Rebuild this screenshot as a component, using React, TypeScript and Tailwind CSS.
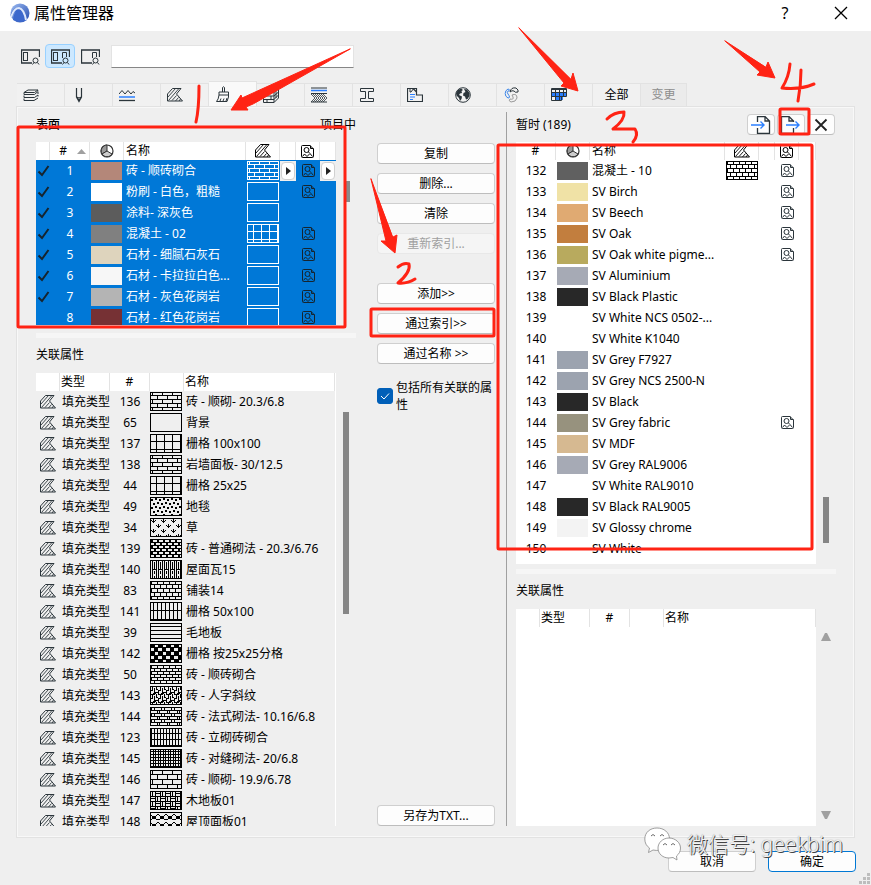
import clsx from 'clsx';
import { useId, type ReactNode } from 'react';

type Pattern = { w: number; h: number; d: string; fill?: boolean };

const PATTERNS: Record<string, Pattern> = {
  brick: { w: 10, h: 8, d: 'M0 3.5H10M0 7.5H10M2.5 0V4M7.5 4V8' },
  brickWide: { w: 10, h: 10, d: 'M0 4.5H10M0 9.5H10M2.5 0V5M7.5 5V10' },
  grid: { w: 8, h: 8, d: 'M6.5 0V8M0 7.5H8' },
  dots: {
    w: 8,
    h: 8,
    d: 'M1 2H3V4H1ZM5 1H7V3H5ZM3 6H5V8H3ZM7 5H8V7H7ZM0 5H1V7H0Z',
    fill: true,
  },
  grass: {
    w: 10,
    h: 10,
    d: 'M1 2L3.5 4.5L6 2M3.5 1V5M6 7L8.5 9.5L11 7M8.5 6V10M-4 7L-1.5 9.5L1 7',
  },
  brickDense: {
    w: 6,
    h: 6,
    d: 'M0 0H6V1H0ZM0 3H6V4H0ZM1 0H3V3H1ZM4 3H6V6H4Z',
    fill: true,
  },
  roof: { w: 6, h: 14, d: 'M.5 0V14M2.5 0V14M4.5 2V9M4.5 11V14M2.5 9.5H6' },
  paving: { w: 6, h: 8, d: 'M0 3.5H6M0 7.5H6M1.5 0V4M4.5 4V8' },
  gridTall: { w: 4, h: 9, d: 'M3.5 0V9M0 8.5H4' },
  planks: { w: 8, h: 4, d: 'M0 3.5H8' },
  checker: { w: 8, h: 8, d: 'M0 0H5V4H0ZM4 4H8V8H4ZM0 3H8V5H4V4H0ZM0 7H8V8H0Z', fill: true },
  bond: { w: 6, h: 6, d: 'M0 .5H6M0 3.5H6M1.5 0V3M4.5 3V6' },
  herringbone: {
    w: 8,
    h: 8,
    d: 'M0 .5H5M2.5 .5V5M4.5 2V7M0 4.5H2M6.5 0V4M6 3.5H8M4 6.5H8M.5 4V8M2.500 7.500H6',
  },
  french: { w: 10, h: 6, d: 'M0 .5H10M0 3.5H10M1.5 0V3M4.5 0V3M7.5 3V6M9.5 3V6' },
  soldier: { w: 3, h: 6, d: 'M1.5 0V6M0 5.5H3' },
  stack: { w: 5, h: 3, d: 'M.5 0V3M3.5 0V3M0 2.5H5' },
  parquet: {
    w: 10,
    h: 10,
    d: 'M.5 0V10M5.5 0V10M0 .5H10M0 5.5H10M2.5 0V5M7.5 5V10M5 2.5H10M0 7.5H5',
  },
  scales: { w: 8, h: 8, d: 'M0 2L2 4H6L8 2M2 4L4 7L6 4M0 8L4 6L8 8' },
  none: { w: 8, h: 8, d: '' },
};

const FillSwatch = ({ type, className }: { type: string; className?: string }) => {
  const id = useId();
  const p = PATTERNS[type];
  return (
    <svg
      width="32"
      height="19"
      viewBox="0 0 32 19"
      shapeRendering="crispEdges"
      className={clsx('block', className)}>
      <defs>
        <pattern id={id} width={p.w} height={p.h} patternUnits="userSpaceOnUse">
          <path
            d={p.d}
            fill={p.fill ? 'currentColor' : 'none'}
            stroke={p.fill ? 'none' : 'currentColor'}
          />
        </pattern>
      </defs>
      <rect width="32" height="19" fill={`url(#${id})`} />
      <rect x=".5" y=".5" width="31" height="18" fill="none" stroke="currentColor" />
    </svg>
  );
};

const Icon = ({
  children,
  w = 16,
  h = 16,
  className,
}: {
  children: ReactNode;
  w?: number;
  h?: number;
  className?: string;
}) => (
  <svg
    width={w}
    height={h}
    viewBox={`0 0 ${w} ${h}`}
    fill="none"
    stroke="currentColor"
    aria-hidden
    className={clsx('block shrink-0', className)}>
    {children}
  </svg>
);

const HatchIcon = ({ className }: { className?: string }) => (
  <Icon h={14} className={className}>
    <path d="M.5 13V6L5.500 .5H14L9.500 6L15.500 13Z" />
    <path
      d="M1 9L8.500 .5M1.500 12.500L11.500 1M5 12.500L9.500 7.500M8.500 13L11.500 9.500M12 13L13.500 11"
      strokeWidth=".9"
    />
  </Icon>
);

const MediaIcon = () => (
  <Icon w={13} h={13} className="mx-auto">
    <path d="M.5 1.500Q.5 .5 1.500 .5H9L12.500 4V11.500Q12.500 12.500 11.500 12.500H1.500Q.5 12.500 .5 11.500Z" />
    <path d="M9.500 .5V3.500H12.500M1.500 11.500L3.500 9L6 11.500L9 8.500L11.500 11.500" />
    <circle cx="5.500" cy="5" r="2.500" />
    <path d="M7.500 7L8.500 8" />
  </Icon>
);

const SurfaceIcon = () => (
  <Icon w={14} h={14} className="mx-auto text-[#333]">
    <circle cx="7" cy="7" r="6" fill="#fff" strokeWidth="1.200" />
    <path d="M7 7V1A6 6 0 0 0 2 10Z" fill="#999" />
    <path d="M7 7L2 10A6 6 0 0 0 12 10Z" fill="#ccc" />
  </Icon>
);

const LayoutIcon = ({ panes }: { panes: 'left' | 'both' | 'right' }) => (
  <Icon w={19} h={16}>
    <path d="M11 14H.5V1H18.500V8" strokeWidth="1.300" />
    {panes !== 'right' && <rect x="2.500" y="3.500" width="4" height="8" />}
    {panes !== 'left' && <path d="M11.500 9V3.500H15.500V8" />}
    <circle cx="14.500" cy="11.500" r="2.500" />
    <path d="M16.500 13.500L18 15.500M13 13.500L11.500 15.500" />
  </Icon>
);

const TABS: { name: string; icon: ReactNode }[] = [
  {
    name: '图层',
    icon: (
      <Icon>
        <path d="M1 5.500L5 3H15L11.500 5.500ZM1 5.500V7.500H11.500L15.500 4M1 8.500V10.500H11.500L15 8M1 11.500V13.500H11L15 11M15 5V7M15 8V9.500" />
      </Icon>
    ),
  },
  {
    name: '画笔',
    icon: (
      <Icon>
        <path d="M5.500 1V10L8 14.500L10.500 10V1M5.500 10L8 11L10.500 10M8 12V15" strokeWidth="1.200" />
      </Icon>
    ),
  },
  {
    name: '线型',
    icon: (
      <Icon>
        <path d="M0 7L3 3.500L6 7L9 3.500L12 7L14 4.500L16 6" />
        <path d="M0 10H16" stroke="#2a7fff" strokeWidth="1.500" />
        <path d="M0 13.500H16" strokeWidth="1.300" />
      </Icon>
    ),
  },
  { name: '填充', icon: <HatchIcon /> },
  {
    name: '表面',
    icon: (
      <Icon>
        <path d="M7.500 6V1.500Q8.500 0 9.500 1.500V6M4 9V6H13.500V9M4 9H13.500V11L12 15.500H1.500Q3.500 13.500 4 9ZM5 15L6 12.500M8 15L9 12.500M11 15L12 12" />
      </Icon>
    ),
  },
  {
    name: '建筑材料',
    icon: (
      <Icon>
        <path d="M.5 5.500H11V15.500H.5ZM.5 9H11M.5 12.500H11M4 5.500V9M8 9V12.500M4 12.500V15.500M.5 5.500L5 1.500H15.500L11 5.500M15.500 1.500V11L11 15.500M11 9L15.500 5M11 12.500L15.500 8M13 4V11" />
      </Icon>
    ),
  },
  {
    name: '复合结构',
    icon: (
      <Icon>
        <path d="M0 1H16M0 6.500H16M0 15H16" />
        <path d="M0 3.500H16" stroke="#2a7fff" strokeWidth="1.500" />
        <path
          d="M0 7L4 11M4 7L8 11M8 7L12 11M12 7L16 11M0 15L4 11M4 15L8 11M8 15L12 11M12 15L16 11M2 7L6 11M6 7L10 11M10 7L14 11M2 15L6 11M6 15L10 11M10 15L14 11"
          strokeWidth=".8"
        />
      </Icon>
    ),
  },
  {
    name: '截面',
    icon: (
      <Icon>
        <path d="M1.500 1.500H14.500V4.500H9.500V11.500H14.500V14.500H1.500V11.500H6.500V4.500H1.500Z" />
      </Icon>
    ),
  },
  {
    name: '区域',
    icon: (
      <Icon>
        <path d="M.5 1.500H9.500V8H15.500V14.500H.5ZM9.500 5L6 1.500" strokeWidth="1.200" />
        <path d="M3 7.500H8M3 10H8M3 12.500H6" stroke="#2a7fff" />
        <path d="M3 1V5H4L7 1" />
      </Icon>
    ),
  },
  {
    name: '城市',
    icon: (
      <Icon>
        <circle cx="8" cy="8" r="7.300" />
        <path
          d="M1 6L3 3L6 1.500L8 3L6.500 4L7 6L5 6.500L4 8L7 9.500L6.500 12L5 14L4 11L1.500 8.500ZM9 2L12 2.500L14.500 6L14.500 9L12.500 12L11 12.500L10 9.500L8 8.500L8.500 6L10.500 5Z"
          fill="currentColor"
          stroke="none"
        />
      </Icon>
    ),
  },
  {
    name: '操作配置文件',
    icon: (
      <Icon>
        <path d="M5 2A5 5 0 0 0 5 11Q8 11 5 7Q3 4 6 4Q7 2 5 2Z" stroke="#3c86e8" />
        <path d="M7 5Q8 0 13 1Q16 3 15 5Q12 6 11 4Q9 3 7 5Z" />
        <path d="M9 8Q14 6 14 11Q13 15 8 15Q5 14 7 12Q11 13 10 10Z" stroke="#999" />
      </Icon>
    ),
  },
  {
    name: 'MEP系统',
    icon: (
      <Icon>
        <path d="M1 5H16V9H12V13H4V9H1Z" fill="#2a7fff" stroke="none" />
        <path d="M.5 1.500V13.500H10.500V9.500H15.500V1.500ZM4.500 2V13M8.500 2V13M12.500 2V10M.5 5.500H15.500M.5 9.500H12" />
        <path d="M.5 2.500H15.500" />
      </Icon>
    ),
  },
];

const SURFACES = [
  { no: 1, color: '#b48779', name: '砖 - 顺砖砌合', fill: 'brick', media: true },
  { no: 2, color: '#ffffff', name: '粉刷 - 白色，粗糙', fill: 'none', media: true },
  { no: 3, color: '#5c5c5c', name: '涂料- 深灰色', fill: 'none', media: false },
  { no: 4, color: '#808080', name: '混凝土 - 02', fill: 'grid', media: true },
  { no: 5, color: '#ded4bd', name: '石材 - 细腻石灰石', fill: 'none', media: true },
  { no: 6, color: '#f7f7f7', name: '石材 - 卡拉拉白色...', fill: 'none', media: true },
  { no: 7, color: '#b4b4b4', name: '石材 - 灰色花岗岩', fill: 'none', media: true },
  { no: 8, color: '#763134', name: '石材 - 红色花岗岩', fill: 'none', media: true },
];

const FILLS = [
  { no: 136, fill: 'brick', name: '砖 - 顺砌- 20.3/6.8' },
  { no: 65, fill: 'none', name: '背景' },
  { no: 137, fill: 'grid', name: '栅格 100x100' },
  { no: 138, fill: 'brick', name: '岩墙面板- 30/12.5' },
  { no: 44, fill: 'grid', name: '栅格 25x25' },
  { no: 49, fill: 'dots', name: '地毯' },
  { no: 34, fill: 'grass', name: '草' },
  { no: 139, fill: 'brickDense', name: '砖 - 普通砌法 - 20.3/6.76' },
  { no: 140, fill: 'roof', name: '屋面瓦15' },
  { no: 83, fill: 'paving', name: '铺装14' },
  { no: 141, fill: 'gridTall', name: '栅格 50x100' },
  { no: 39, fill: 'planks', name: '毛地板' },
  { no: 142, fill: 'checker', name: '栅格 按25x25分格' },
  { no: 50, fill: 'bond', name: '砖 - 顺砖砌合' },
  { no: 143, fill: 'herringbone', name: '砖 - 人字斜纹' },
  { no: 144, fill: 'french', name: '砖 - 法式砌法- 10.16/6.8' },
  { no: 123, fill: 'soldier', name: '砖 - 立砌砖砌合' },
  { no: 145, fill: 'stack', name: '砖 - 对缝砌法- 20/6.8' },
  { no: 146, fill: 'brickWide', name: '砖 - 顺砌- 19.9/6.78' },
  { no: 147, fill: 'parquet', name: '木地板01' },
  { no: 148, fill: 'scales', name: '屋顶面板01' },
];

const TEMPORARY = [
  { no: 132, color: '#606060', name: '混凝土 - 10', fill: 'paving', media: true },
  { no: 133, color: '#f0e2a6', name: 'SV Birch', media: true },
  { no: 134, color: '#e0aa72', name: 'SV Beech', media: true },
  { no: 135, color: '#c27e3e', name: 'SV Oak', media: true },
  { no: 136, color: '#b8aa5e', name: 'SV Oak white pigme...', media: true },
  { no: 137, color: '#a6aab5', name: 'SV Aluminium' },
  { no: 138, color: '#282828', name: 'SV Black Plastic' },
  { no: 139, color: '#ffffff', name: 'SV White NCS 0502-...' },
  { no: 140, color: '#ffffff', name: 'SV White K1040' },
  { no: 141, color: '#9ca3af', name: 'SV Grey F7927' },
  { no: 142, color: '#9ca3af', name: 'SV Grey NCS 2500-N' },
  { no: 143, color: '#282828', name: 'SV Black' },
  { no: 144, color: '#97927e', name: 'SV Grey fabric', media: true },
  { no: 145, color: '#d6b991', name: 'SV MDF' },
  { no: 146, color: '#a6aab5', name: 'SV Grey RAL9006' },
  { no: 147, color: '#ffffff', name: 'SV White RAL9010' },
  { no: 148, color: '#282828', name: 'SV Black RAL9005' },
  { no: 149, color: '#f3f3f3', name: 'SV Glossy chrome' },
  { no: 150, color: '#ffffff', name: 'SV White' },
];

const Th = ({ children, className }: { children?: ReactNode; className?: string }) => (
  <th
    className={clsx(
      'h-[18px] border-r border-[#e3e3e3] bg-white p-0 font-normal leading-[18px]',
      className,
    )}>
    {children}
  </th>
);

const ColorBox = ({ color }: { color: string }) => (
  <div className="ml-px h-[18px] w-[31px]" style={{ backgroundColor: color }} />
);

const Button = ({
  children,
  disabled,
  className,
}: {
  children: ReactNode;
  disabled?: boolean;
  className?: string;
}) => (
  <button
    type="button"
    disabled={disabled}
    className={clsx(
      'flex h-[21px] items-center justify-center rounded border',
      disabled
        ? 'border-[#e8e8e8] bg-[#f5f5f5] text-[#a0a0a0]'
        : 'border-[#cfcfcf] border-b-[#bdbdbd] bg-[#fdfdfd]',
      className,
    )}>
    {children}
  </button>
);

const PopButton = ({ label }: { label: string }) => (
  <div className="flex h-5 items-center justify-center bg-[#efefef]">
    <button
      type="button"
      aria-label={label}
      className="flex h-[18px] w-[14px] items-center justify-center rounded border border-[#d0d0d0] bg-white text-[#222]">
      <Icon w={5} h={8}>
        <path d="M0 0L5 4L0 8Z" fill="currentColor" stroke="none" />
      </Icon>
    </button>
  </div>
);

const SurfaceTable = () => (
  <div className="h-[183px] grow overflow-hidden">
    <table className="w-full table-fixed border-separate border-spacing-0">
      <colgroup>
        <col className="w-[14px]" />
        <col className="w-[40px]" />
        <col className="w-[34px]" />
        <col />
        <col className="w-[34px]" />
        <col className="w-[16px]" />
        <col className="w-[24px]" />
        <col className="w-[16px]" />
      </colgroup>
      <thead>
        <tr>
          <Th />
          <Th>
            <div className="flex items-center justify-end gap-[10px] pr-[3px]">
              #
              <Icon w={9} h={5} className="text-[#a0a0a0]">
                <path d="M0 5L4.500 0L9 5Z" fill="currentColor" stroke="none" />
              </Icon>
            </div>
          </Th>
          <Th>
            <SurfaceIcon />
          </Th>
          <Th className="pl-[2px] text-left">名称</Th>
          <Th>
            <HatchIcon className="mx-auto" />
          </Th>
          <Th />
          <Th>
            <MediaIcon />
          </Th>
          <Th />
        </tr>
      </thead>
      <tbody className="bg-[#0078d7] text-white">
        {SURFACES.map(row => (
          <tr key={row.no} className="h-[21px]">
            <td className="p-0 text-[#16242e]">
              {row.no < 8 && (
                <Icon w={13} h={12} className="ml-px">
                  <path d="M1.500 6.500L5 10L11.500 1" strokeWidth="2" />
                </Icon>
              )}
            </td>
            <td className="p-0 text-center">{row.no}</td>
            <td className="p-0">
              <ColorBox color={row.color} />
            </td>
            <td className="truncate p-0 pl-[2px]">{row.name}</td>
            <td className="p-0">
              <FillSwatch type={row.fill} className="ml-px" />
            </td>
            <td className="p-0">{row.no === 1 && <PopButton label="选择填充" />}</td>
            <td className="p-0 text-[#16242e]">{row.media && <MediaIcon />}</td>
            <td className="p-0">{row.no === 1 && <PopButton label="选择纹理" />}</td>
          </tr>
        ))}
      </tbody>
    </table>
  </div>
);

const RelatedHead = () => (
  <>
    <colgroup>
      <col className="w-[24px]" />
      <col className="w-[50px]" />
      <col className="w-[40px]" />
      <col className="w-[34px]" />
      <col />
    </colgroup>
    <thead>
      <tr>
        <Th />
        <Th className="pl-px text-left">类型</Th>
        <Th>#</Th>
        <Th />
        <Th className="pl-px text-left">名称</Th>
      </tr>
    </thead>
  </>
);

const FillTable = () => (
  <div className="h-[453px] grow overflow-hidden border-r border-white">
    <table className="w-full table-fixed border-separate border-spacing-0">
      <RelatedHead />
      <tbody>
        {FILLS.map(row => (
          <tr key={row.no} className="h-[21px]">
            <td className="p-0 pl-[4px] text-[#2b353b]">
              <HatchIcon />
            </td>
            <td className="overflow-hidden whitespace-nowrap p-0 pl-[2px]">填充类型</td>
            <td className="p-0 text-center">{row.no}</td>
            <td className="p-0">
              <FillSwatch type={row.fill} />
            </td>
            <td className="whitespace-nowrap p-0 pl-[2px]">{row.name}</td>
          </tr>
        ))}
      </tbody>
    </table>
  </div>
);

const TemporaryTable = () => (
  <div className="h-[422px] grow bg-white">
    <div className="h-[411px] overflow-hidden">
      <table className="w-full table-fixed border-separate border-spacing-0">
        <colgroup>
          <col className="w-[40px]" />
          <col className="w-[34px]" />
          <col />
          <col className="w-[34px]" />
          <col className="w-[16px]" />
          <col className="w-[24px]" />
          <col className="w-[17px]" />
        </colgroup>
        <thead>
          <tr>
            <Th>#</Th>
            <Th>
              <SurfaceIcon />
            </Th>
            <Th className="pl-[2px] text-left">名称</Th>
            <Th>
              <HatchIcon className="mx-auto" />
            </Th>
            <Th />
            <Th>
              <MediaIcon />
            </Th>
            <Th />
          </tr>
        </thead>
        <tbody>
          {TEMPORARY.map(row => (
            <tr key={row.no} className="h-[21px]">
              <td className="p-0 text-center">{row.no}</td>
              <td className="p-0">
                <ColorBox color={row.color} />
              </td>
              <td className="truncate p-0 pl-[2px]">{row.name}</td>
              <td className="p-0">
                {row.fill && <FillSwatch type={row.fill} className="ml-px" />}
              </td>
              <td className="p-0" />
              <td className="p-0 text-[#2b353b]">{row.media && <MediaIcon />}</td>
              <td className="p-0" />
            </tr>
          ))}
        </tbody>
      </table>
    </div>
  </div>
);

// red pen marks drawn over the dialog
const Marks = () => (
  <svg
    width="871"
    height="885"
    viewBox="0 0 871 885"
    className="pointer-events-none absolute left-0 top-0 text-[#ff2314]"
    fill="none"
    stroke="currentColor"
    strokeWidth="3"
    strokeLinecap="round"
    strokeLinejoin="round"
    aria-hidden>
    <rect x="18" y="127" width="327" height="200" rx="1" />
    <rect x="498" y="145" width="314" height="404" rx="1" />
    <rect x="371" y="309" width="123" height="27" rx="1" />
    <rect x="780" y="109" width="29" height="25" rx="1" />
    <g fill="currentColor" strokeWidth="1">
      <path d="M350 49L242 98L241 95L231 110L248 110L246 107L253 104Z" />
      <path d="M371 179L386 241L381 241L395 253L397 235L393 237Z" />
      <path d="M519 28L564 83L561 86L578 91L573 73L571 79Z" />
      <path d="M725 41L760 72L757 75L775 78L768 62L766 67Z" />
    </g>
    <path d="M199 86Q199 109 196 122" />
    <path d="M398 267Q404 262 409 264Q411 272 398 283Q407 284 415 279" />
    <path d="M607 119Q614 112 624 112Q625 120 613 129L635 129Q639 135 633 142" />
    <path d="M790 64Q789 77 782 88Q800 90 814 84M801 70Q801 85 798 101" />
  </svg>
);

const Watermark = () => (
  <div className="pointer-events-none absolute bottom-6 right-7 flex items-center gap-[6px]">
    <svg width="37" height="34" viewBox="0 0 37 34" fill="#fff" stroke="#888" strokeWidth=".8">
      <path d="M13 1C6 1 .8 5.500 .8 12C.8 16 2.500 19 5.500 21L4.500 25.500L9 23C18 25 25.500 20 25.500 12C25.500 5.500 20 1 13 1Z" />
      <path d="M25 11C19 11 14 15.500 14 21C14 27 19 31 25 31L29 30.500L33 33L32.500 29C35 27 36.500 24.500 36.500 21C36.500 15.500 31 11 25 11Z" />
      <path d="M7 9Q9 6 11 9M16 9Q18 6 20 9M19 18Q21 15 23 18M27 18Q29 15 31 18" fill="none" stroke="#444" />
    </svg>
    <span className="whitespace-nowrap text-[21px] leading-8 font-light text-[#f4f4f4] [text-shadow:1px_1px_0_#444,0_0_1px_#777]">
      微信号: geekbim
    </span>
  </div>
);

export default function App() {
  return (
    <div className="relative flex min-h-screen flex-col bg-[#efefef] font-['Noto_Sans','Noto_Sans_CJK_SC',sans-serif] text-xs text-black">
      <header className="flex h-[31px] items-center bg-white pl-[10px] pb-[6px]">
        <svg width="20" height="20" viewBox="0 0 20 20" aria-hidden>
          <defs>
            <linearGradient id="logo" x1="0" y1="0" x2="1" y2="1">
              <stop offset="0" stopColor="#9dbcf2" />
              <stop offset="1" stopColor="#2149ad" />
            </linearGradient>
          </defs>
          <circle cx="10" cy="10" r="9.500" fill="url(#logo)" />
          <path d="M0 13Q3 4 9 4Q15 5 17 17Q11 21 3 17Q4 8 9 6" fill="#3c68cc" />
          <path d="M1 14Q4 5 9 5Q14 6 16 17" fill="none" stroke="#dfe9fc" strokeWidth="2" />
        </svg>
        <h1 className="ml-1 grow text-base leading-6">属性管理器</h1>
        <button type="button" className="w-8 text-base leading-6">
          ?
        </button>
        <button type="button" aria-label="关闭" className="ml-[33px] mr-[23px]">
          <Icon w={14} h={14}>
            <path d="M1 1L13 13M13 1L1 13" strokeWidth="1.300" />
          </Icon>
        </button>
      </header>

      <div className="flex h-[50px] items-center pl-[15px] text-[#2b353b]">
        {(['left', 'both', 'right'] as const).map(panes => (
          <button
            key={panes}
            type="button"
            aria-label={panes}
            className={clsx(
              'flex h-6 w-[30px] items-center justify-center rounded-sm border pt-px',
              panes === 'both'
                ? 'border-[#99d1ff] bg-[#cce8ff]'
                : 'border-transparent',
            )}>
            <LayoutIcon panes={panes} />
          </button>
        ))}
        <input
          type="text"
          aria-label="搜索"
          className="ml-[6px] h-[23px] w-[243px] border border-[#e3e3e3] border-b-[#868686] bg-white px-1 outline-none"
        />
      </div>

      <nav className="flex h-[25px] items-end pl-[17px]">
        {TABS.map(tab => (
          <button
            key={tab.name}
            type="button"
            aria-label={tab.name}
            className={clsx(
              'flex w-[48px] items-center border-t border-r border-[#e2e2e2] pl-[6px] text-[#2b353b]',
              tab.name === '表面' ? 'h-[25px] bg-[#f9f9f9]' : 'h-[23px] bg-[#f1f1f1]',
            )}>
            {tab.icon}
          </button>
        ))}
        <button
          type="button"
          className="h-[23px] w-[48px] border-t border-r border-[#e2e2e2] bg-[#f1f1f1]">
          全部
        </button>
        <button
          type="button"
          disabled
          className="h-[23px] w-[46px] border-t border-r border-[#e2e2e2] bg-[#ebebeb] text-[#8d8d8d]">
          变更
        </button>
      </nav>

      <main className="mx-4 flex border border-[#e2e2e2] pb-[11px] pl-[19px] pr-[18px] outline-1 -outline-offset-2 outline-[#f8f8f8]">
        <section className="flex min-w-0 flex-[320] flex-col">
          <div className="flex h-[35px] items-center justify-between">
            <h2 className="font-medium">表面</h2>
            <span>项目中</span>
          </div>
          <div className="flex">
            <SurfaceTable />
            <div className="w-5 shrink-0 pl-[10px] pt-[39px]">
              <div className="h-[21px] w-1 bg-[#8a8a8a]" />
            </div>
          </div>
          <div className="mt-2 h-[5px] bg-[#f6f6f6]" />
          <h2 className="h-[35px] leading-[33px]">关联属性</h2>
          <div className="flex">
            <FillTable />
            <div className="w-5 shrink-0 pl-[7px] pt-[39px]">
              <div className="h-[202px] w-[6px] bg-[#868686]" />
            </div>
          </div>
        </section>

        <section className="ml-[21px] flex w-[118px] shrink-0 flex-col gap-[9px] pt-9">
          <Button>复制</Button>
          <Button>删除...</Button>
          <Button>清除</Button>
          <Button disabled>重新索引...</Button>
          <Button className="mt-5">添加&gt;&gt;</Button>
          <Button>通过索引&gt;&gt;</Button>
          <Button>通过名称 &gt;&gt;</Button>
          <label className="mt-[6px] flex items-center gap-[3px] leading-[17px]">
            <span className="relative h-4 w-4 shrink-0">
              <input
                type="checkbox"
                defaultChecked
                className="peer block h-4 w-4 appearance-none rounded-[3px] border border-[#888] checked:border-[#005fb8] checked:bg-[#005fb8]"
              />
              <Icon className="pointer-events-none absolute left-0 top-0 text-white opacity-0 peer-checked:opacity-100">
                <path d="M4 8L7 11L12 5.500" />
              </Icon>
            </span>
            包括所有关联的属性
          </label>
          <Button className="mt-auto">另存为TXT...</Button>
        </section>

        <div className="ml-[11px] mt-[5px] w-px shrink-0 bg-[#a0a0a0]" />

        <section className="ml-[9px] flex min-w-0 flex-[320] flex-col">
          <div className="flex h-[35px] items-center gap-[2px] pr-px">
            <h2 className="grow">暂时 (189)</h2>
            <Button className="w-7">
              <Icon w={20} h={18}>
                <path d="M6.500 6V.5H14L18.500 5V17.500H6.500V12M14 .5V5H18.500" stroke="#2b353b" strokeWidth="1.300" />
                <path d="M0 9H13M9.500 5.500L13 9L9.500 12.500" stroke="#2a7fff" strokeWidth="1.400" />
              </Icon>
            </Button>
            <Button className="w-7">
              <Icon w={20} h={18}>
                <path d="M12.500 6V5L8 .5H.5V17.500H12.500V12M8 .5V5H12.500" stroke="#2b353b" strokeWidth="1.300" />
                <path d="M5 9H18M14.500 5.500L18 9L14.500 12.500" stroke="#2a7fff" strokeWidth="1.400" />
              </Icon>
            </Button>
            <Button className="w-7">
              <Icon w={14} h={14}>
                <path d="M1.500 1.500L12.500 12.500M12.500 1.500L1.500 12.500" stroke="#222" strokeWidth="1.800" />
              </Icon>
            </Button>
          </div>
          <div className="flex">
            <TemporaryTable />
            <div className="w-5 shrink-0 pl-[7px] pt-[355px]">
              <div className="h-[46px] w-[6px] bg-[#868686]" />
            </div>
          </div>
          <div className="mt-[5px] h-[5px] bg-[#f6f6f6]" />
          <h2 className="h-[35px] leading-[33px]">关联属性</h2>
          <div className="flex grow">
            <div className="grow bg-white">
              <table className="w-full table-fixed border-separate border-spacing-0">
                <RelatedHead />
              </table>
            </div>
            <div className="flex w-5 shrink-0 flex-col items-center justify-between pt-6 pb-[7px] text-[#a0a0a0]">
              <Icon w={10} h={8}>
                <path d="M0 8L4 0H6L10 8Z" fill="currentColor" stroke="none" />
              </Icon>
              <Icon w={10} h={8}>
                <path d="M0 0L4 8H6L10 0Z" fill="currentColor" stroke="none" />
              </Icon>
            </div>
          </div>
        </section>
      </main>

      <footer className="flex justify-end gap-3 pt-[13px] pr-[15px] pb-[13px]">
        <Button className="w-[88px]">取消</Button>
        <button
          type="button"
          className="h-[21px] w-[88px] rounded border border-[#0078d4] bg-[#fdfdfd] leading-[19px]">
          确定
        </button>
      </footer>

      <Icon w={12} h={12} className="absolute bottom-0 right-0 text-[#bdbdbd]">
        <path d="M8 0H11V3H8ZM4 4H7V7H4ZM8 4H11V7H8ZM0 8H3V11H0ZM4 8H7V11H4ZM8 8H11V11H8Z" fill="currentColor" stroke="none" />
      </Icon>
      <Watermark />
      <Marks />
    </div>
  );
}
